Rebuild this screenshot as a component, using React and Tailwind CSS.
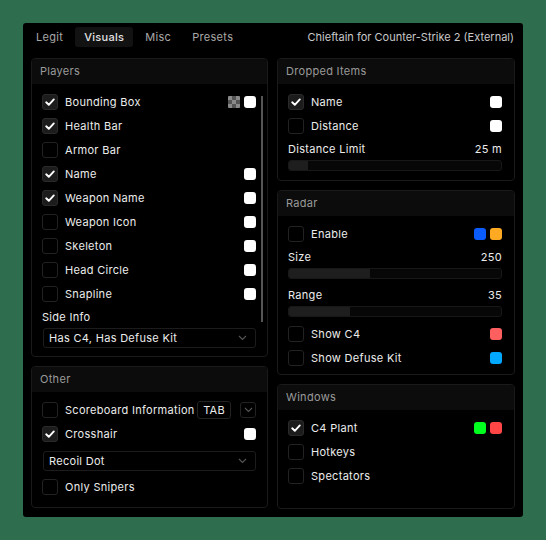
import React from 'react'

const font = { fontFamily: 'Inter, "Noto Sans", sans-serif' }

function Check({ on }) {
  return (
    <div
      className={`w-4 h-4 rounded-[3px] border flex items-center justify-center shrink-0 ${
        on ? 'bg-[#1c1c1c] border-[#2a2a2a]' : 'bg-black border-[#222]'
      }`}
    >
      {on && (
        <svg width="12" height="12" viewBox="0 0 12 12">
          <polyline points="2.2,6.3 4.8,8.8 9.8,3.4" fill="none" stroke="#fff" strokeWidth="1.9" strokeLinecap="round" strokeLinejoin="round" />
        </svg>
      )}
    </div>
  )
}

function Swatch({ color }) {
  return <div className="w-3 h-3 rounded-[3px]" style={{ background: color }} />
}

function Checker() {
  const cells = [1, 0, 1, 0, 1, 0, 1, 0, 1]
  return (
    <div className="w-3 h-3 grid grid-cols-3 rounded-[1px] overflow-hidden">
      {cells.map((c, i) => (
        <div key={i} className={c ? 'bg-[#8a8a8a]' : 'bg-[#555]'} />
      ))}
    </div>
  )
}

function Row({ label, on, children }) {
  return (
    <div className="h-6 flex items-center">
      <Check on={on} />
      <span className="ml-[7px] text-[#ececec] whitespace-nowrap">{label}</span>
      <div className="ml-auto flex items-center gap-1">{children}</div>
    </div>
  )
}

function Chevron() {
  return (
    <svg width="9" height="6" viewBox="0 0 9 6">
      <polyline points="1,1 4.5,4.5 8,1" fill="none" stroke="#555" strokeWidth="1.1" />
    </svg>
  )
}

function Select({ value }) {
  return (
    <div className="h-5 ml-px border border-[#1c1c1c] rounded-[3px] flex items-center pl-[5px] pr-[8px] text-[#ececec]">
      <span>{value}</span>
      <span className="ml-auto">
        <Chevron />
      </span>
    </div>
  )
}

function Slider({ label, value, pct, last }) {
  return (
    <div className={last ? '' : 'mb-[5px]'}>
      <div className="h-[22px] flex items-center justify-between text-[#ececec]">
        <span>{label}</span>
        <span>{value}</span>
      </div>
      <div className="h-[11px] rounded-[3px] border border-[#181818] bg-[#070707] overflow-hidden">
        <div className="h-full bg-[#1e1e1e]" style={{ width: pct + '%' }} />
      </div>
    </div>
  )
}

function Panel({ title, children, className = '', body = '' }) {
  return (
    <div className={`border border-[#1a1a1a] rounded-[4px] bg-black overflow-hidden relative ${className}`}>
      <div className="h-[25px] bg-[#0c0c0c] flex items-center pl-2 text-[#9a9a9a]">{title}</div>
      <div className={body}>{children}</div>
    </div>
  )
}

export default function App() {
  return (
    <div className="w-full h-[540px] bg-[#2e6e4e] p-[23px]" style={font}>
      <div className="w-[500px] h-[494px] bg-black rounded-[3px] pt-1 text-[11px] tracking-[0.3px]">
        {/* Tabs */}
        <div className="h-5 flex items-center pl-1 pr-[9px]">
          <div className="flex gap-[3px]">
            <div className="px-[9px] h-5 flex items-center text-[#a8a8a8]">Legit</div>
            <div className="px-[9px] h-5 flex items-center text-[#e2e2e2] bg-[#121212] rounded-[3px] font-medium">Visuals</div>
            <div className="px-[9px] h-5 flex items-center text-[#a8a8a8]">Misc</div>
            <div className="px-[9px] h-5 flex items-center text-[#a8a8a8]">Presets</div>
          </div>
          <div className="ml-auto text-[#c8c8c8] tracking-[0px]">Chieftain for Counter-Strike 2 (External)</div>
        </div>

        <div className="flex gap-[9px] pl-2 mt-[11px]">
          {/* Left column */}
          <div className="w-[237px] flex flex-col gap-[9px]">
            <Panel title="Players" className="h-[299px]" body="pt-[6px] pl-[10px] pr-[11px]">
              <Row label="Bounding Box" on>
                <Checker />
                <Swatch color="#fff" />
              </Row>
              <Row label="Health Bar" on />
              <Row label="Armor Bar" />
              <Row label="Name" on>
                <Swatch color="#fff" />
              </Row>
              <Row label="Weapon Name" on>
                <Swatch color="#fff" />
              </Row>
              <Row label="Weapon Icon">
                <Swatch color="#fff" />
              </Row>
              <Row label="Skeleton">
                <Swatch color="#fff" />
              </Row>
              <Row label="Head Circle">
                <Swatch color="#fff" />
              </Row>
              <Row label="Snapline">
                <Swatch color="#fff" />
              </Row>
              <div className="h-[22px] flex items-center text-[#ececec] pr-3">Side Info</div>
              <Select value="Has C4, Has Defuse Kit" />
              <div className="absolute left-[229px] top-[37px] w-[2px] h-[226px] bg-[#555]" />
            </Panel>
            <Panel title="Other" className="h-[142px]" body="pt-[6px] pl-[10px] pr-[11px]">
              <Row label="Scoreboard Information">
                <div className="h-[18px] px-[5px] border border-[#222] rounded-[3px] flex items-center text-[#ececec] mr-[5px]">TAB</div>
                <div className="w-4 h-4 border border-[#222] rounded-[3px] flex items-center justify-center">
                  <Chevron />
                </div>
              </Row>
              <Row label="Crosshair" on>
                <Swatch color="#fff" />
              </Row>
              <div className="mt-[5px] mb-1">
                <Select value="Recoil Dot" />
              </div>
              <Row label="Only Snipers" />
            </Panel>
          </div>

          {/* Right column */}
          <div className="w-[238px] flex flex-col gap-[9px]">
            <Panel title="Dropped Items" className="h-[123px]" body="pt-[6px] pl-[10px] pr-3">
              <Row label="Name" on>
                <Swatch color="#fff" />
              </Row>
              <Row label="Distance">
                <Swatch color="#fff" />
              </Row>
              <Slider label="Distance Limit" value="25 m" pct={9} last />
            </Panel>
            <Panel title="Radar" className="h-[185px]" body="pt-[6px] pl-[10px] pr-3">
              <Row label="Enable">
                <Swatch color="#0a5cff" />
                <Swatch color="#ffaa22" />
              </Row>
              <Slider label="Size" value="250" pct={38} />
              <Slider label="Range" value="35" pct={29} />
              <Row label="Show C4">
                <Swatch color="#ff5f5f" />
              </Row>
              <Row label="Show Defuse Kit">
                <Swatch color="#00a8ff" />
              </Row>
            </Panel>
            <Panel title="Windows" className="h-[125px]" body="pt-[6px] pl-[10px] pr-3">
              <Row label="C4 Plant" on>
                <Swatch color="#00ff1e" />
                <Swatch color="#ff4646" />
              </Row>
              <Row label="Hotkeys" />
              <Row label="Spectators" />
            </Panel>
          </div>
        </div>
      </div>
    </div>
  )
}
